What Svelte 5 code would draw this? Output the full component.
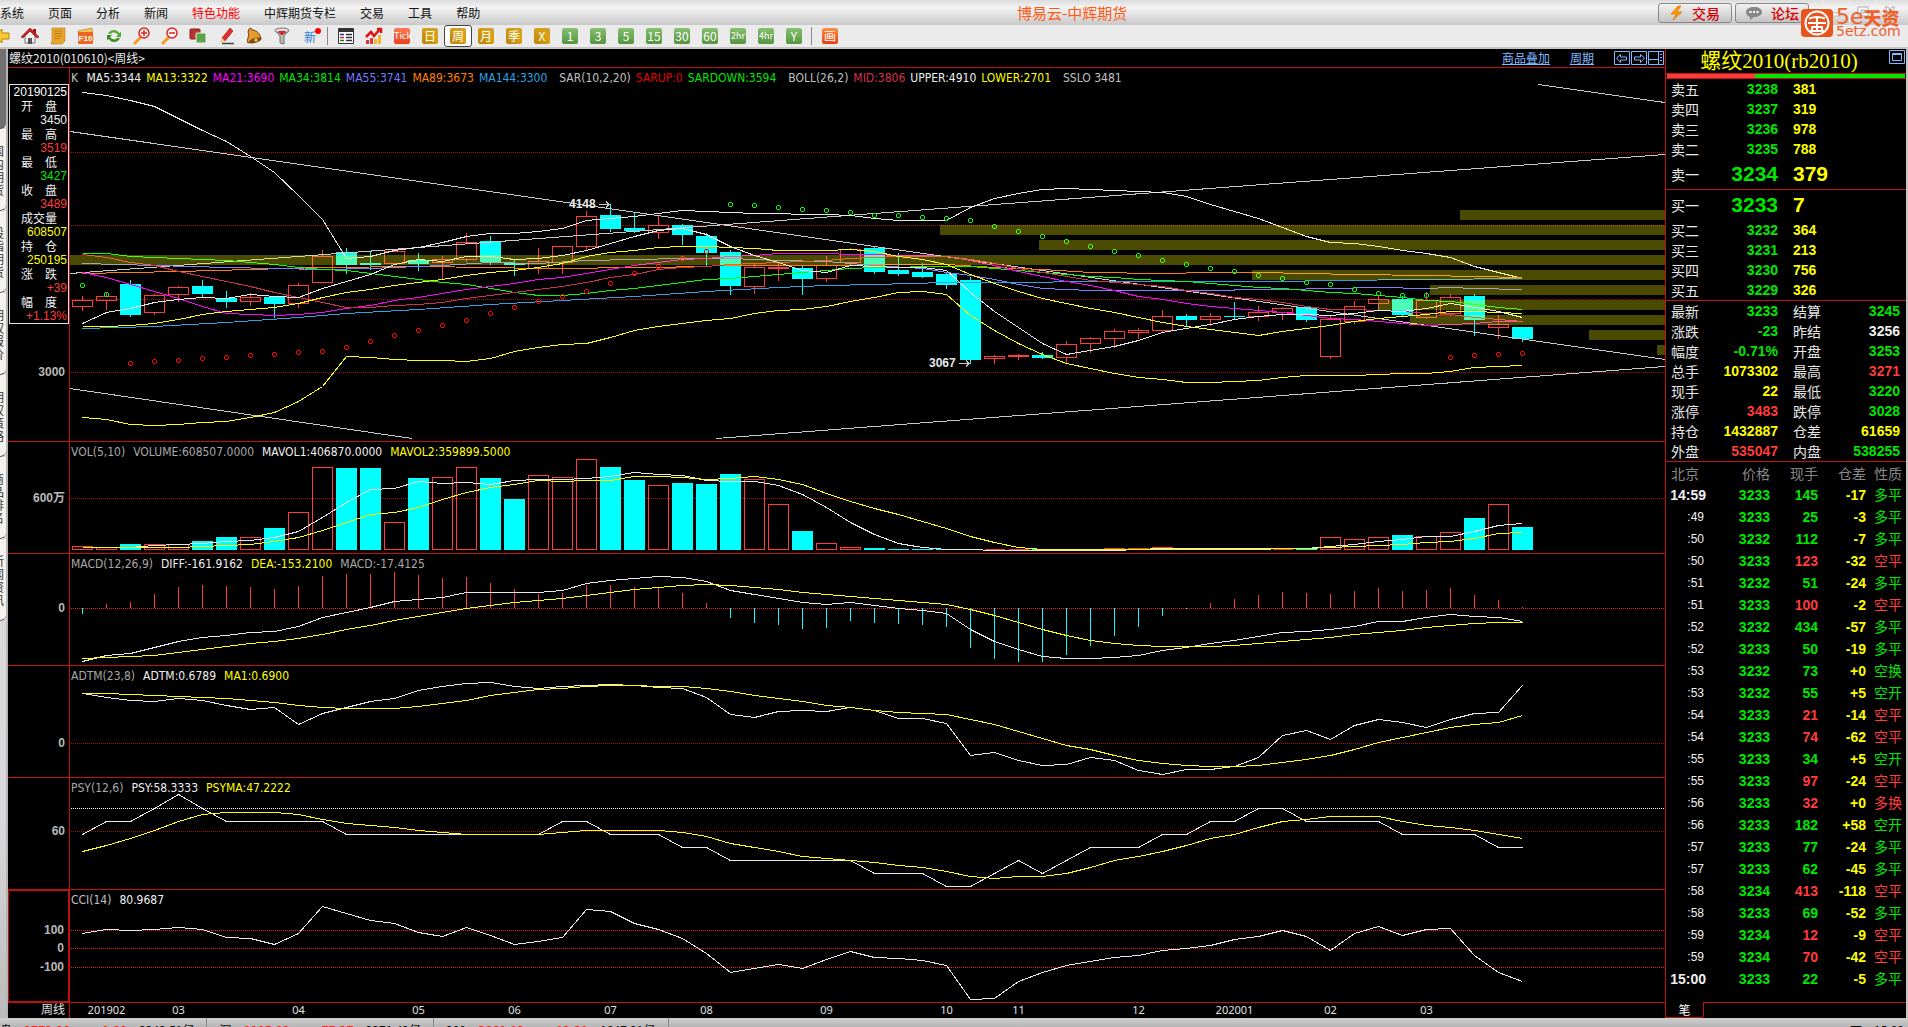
<script>
  let period = $state('周');

  const menus = ['系统', '页面', '分析', '新闻', '特色功能', '中辉期货专栏', '交易', '工具', '帮助'];
  const sideTabs = ['国内期货', '股指期货', '期权报价', '期权策略', '商品排名', '新闻资讯'];

  const periods = [
    { label: 'Tick', tone: 'red' },
    { label: '日', tone: 'gold' },
    { label: '周', tone: 'gold' },
    { label: '月', tone: 'gold' },
    { label: '季', tone: 'gold' },
    { label: 'X', tone: 'gold' },
    { label: '1', tone: 'green' },
    { label: '3', tone: 'green' },
    { label: '5', tone: 'green' },
    { label: '15', tone: 'green' },
    { label: '30', tone: 'green' },
    { label: '60', tone: 'green' },
    { label: '2hr', tone: 'green' },
    { label: '4hr', tone: 'green' },
    { label: 'Y', tone: 'green' }
  ];

  const info = [
    ['开　盘', '3450', 'white'],
    ['最　高', '3519', 'red'],
    ['最　低', '3427', 'green'],
    ['收　盘', '3489', 'red'],
    ['成交量', '608507', 'yellow'],
    ['持　仓', '250195', 'yellow'],
    ['涨　跌', '+39', 'red'],
    ['幅　度', '+1.13%', 'red']
  ];

  // All series share one drawing space: x runs from LEFT, one bar every STEP
  const LEFT = 70;
  const WIDTH = 1595;
  const STEP = 24;
  const cx = (i) => 82.5 + i * STEP;
  const pct = (x) => ((x - LEFT) / WIDTH) * 100;

  // a series is a list of y values, or of [bar, y] pairs where it is sparse
  const points = (ys) =>
    ys.map((v, i) => (Array.isArray(v) ? `${cx(v[0])},${v[1] + 0.5}` : `${cx(i)},${v + 0.5}`)).join(' ');

  // up (1) or down (0), high, body top, body bottom, low
  const candles = [
    [1, 296, 300, 306, 310], [1, 293, 296, 300, 309], [0, 280, 284, 315, 316], [1, 294, 295, 312, 314],
    [1, 286, 287, 294, 301], [0, 280, 286, 294, 296], [0, 291, 298, 302, 307], [1, 293, 297, 301, 305],
    [0, 296, 297, 304, 317], [1, 283, 285, 303, 307], [1, 250, 256, 282, 282], [0, 248, 252, 265, 273],
    [0, 251, 263, 265, 269], [1, 251, 251, 263, 264], [0, 253, 260, 264, 270], [1, 256, 259, 262, 278],
    [1, 233, 242, 259, 261], [0, 236, 241, 262, 264], [0, 260, 263, 265, 275], [1, 248, 261, 268, 273],
    [1, 246, 246, 262, 273], [1, 211, 216, 246, 250], [0, 204, 215, 229, 231], [0, 213, 228, 231, 232],
    [1, 215, 225, 232, 238], [0, 224, 225, 235, 244], [0, 233, 236, 253, 265], [0, 250, 252, 286, 294],
    [1, 263, 267, 286, 293], [1, 262, 267, 268, 280], [0, 265, 268, 279, 294], [1, 256, 265, 278, 281],
    [1, 248, 249, 262, 264], [0, 247, 248, 272, 273], [0, 253, 270, 274, 275], [0, 263, 272, 277, 277],
    [0, 273, 274, 285, 288], [0, 277, 280, 360, 363], [1, 355, 356, 358, 363], [1, 354, 355, 356, 359],
    [0, 352, 355, 358, 358], [1, 341, 344, 357, 362], [1, 337, 338, 343, 352], [1, 329, 331, 338, 347],
    [1, 328, 330, 332, 338], [1, 310, 316, 330, 332], [0, 314, 316, 320, 325], [1, 313, 316, 319, 325],
    [0, 302, 316, 317, 318], [1, 306, 312, 316, 320], [1, 307, 308, 312, 319], [0, 306, 307, 320, 321],
    [1, 316, 319, 356, 358], [1, 301, 306, 321, 323], [1, 295, 299, 303, 309], [0, 296, 299, 315, 316],
    [1, 292, 300, 317, 318], [1, 294, 297, 313, 315], [0, 294, 296, 320, 335], [1, 315, 324, 327, 338],
    [0, 327, 327, 339, 341]
  ];

  // volume-at-price bands: top, left edge
  const bands = [
    [210, 1460], [225, 940], [240, 1039], [255, 70], [270, 1252],
    [285, 1430], [300, 1378], [315, 1410], [330, 1589], [345, 1657]
  ];

  const trends = [
    [70, 131, 1665, 359], [70, 273, 1665, 154], [1538, 84, 1665, 102], [70, 388, 412, 438], [716, 438, 1665, 366]
  ];

  const priceLines = [
    { tone: 's-white', ys: [92, 95, 100, 106, 118, 130, 141, 156, 172, 195, 219, 258, 256, 250, 247, 242, 236, 233, 233, 231, 228, 220, 218, 216, 213, 210, 211, 212, 213, 213, 214, 214, 215, 218, 220, 220, 220, 207, 198, 193, 189, 188, 189, 190, 191, 192, 196, 204, 211, 218, 227, 236, 242, 243, 246, 250, 253, 257, 266, 272, 278] },
    { tone: 's-orange', ys: [[0, 273], [2, 272], [4, 271], [7, 269], [10, 267], [14, 266], [17, 267], [19, 268], [24, 267], [27, 265], [31, 265], [34, 264], [36, 264], [38, 267], [40, 269], [42, 272], [45, 273], [47, 272], [49, 272], [51, 273], [53, 274], [56, 275], [60, 277]] },
    { tone: 's-violet', ys: [[0, 263], [3, 265], [6, 267], [8, 268], [10, 269], [12, 268], [14, 266], [15, 265], [17, 262], [19, 263], [21, 260], [23, 259], [25, 258], [27, 258], [29, 260], [31, 261], [33, 265], [35, 268], [36, 272], [37, 275], [38, 279], [39, 284], [40, 288], [42, 290], [46, 290], [50, 289], [54, 287], [56, 288], [57, 287], [58, 288], [60, 289]] },
    { tone: 's-blue', ys: [[0, 328], [3, 326], [6, 322], [9, 317], [11, 313], [14, 309], [17, 304], [20, 300], [23, 296], [26, 291], [29, 287], [31, 285], [33, 284], [36, 282], [45, 281], [50, 281], [52, 280], [56, 279], [60, 278]] },
    { tone: 's-lime', ys: [253, 253, 256, 257, 258, 259, 260, 262, 264, 267, 269, 270, 273, 276, 279, 282, 284, 288, 292, 295, 295, 293, 290, 288, 285, 282, 279, 278, 276, 274, 272, 270, 268, 267, 267, 266, 266, 266, 268, 270, 272, 274, 276, 277, 279, 280, 281, 283, 285, 287, 288, 290, 292, 293, 295, 297, 300, 301, 304, 307, 309] },
    { tone: 's-magenta', ys: [272, 277, 284, 291, 298, 306, 313, 314, 315, 314, 312, 308, 305, 300, 297, 293, 289, 286, 283, 279, 277, 273, 269, 265, 262, 259, 258, 256, 255, 253, 253, 253, 254, 254, 255, 255, 256, 260, 265, 271, 276, 281, 285, 290, 296, 299, 303, 306, 308, 310, 312, 315, 318, 319, 321, 323, 325, 324, 323, 321, 321] },
    { tone: 's-crimson', ys: [254, 257, 262, 265, 271, 276, 281, 286, 292, 297, 302, 307, 307, 305, 304, 302, 298, 295, 292, 289, 286, 282, 277, 274, 269, 267, 266, 264, 263, 262, 261, 260, 258, 257, 256, 256, 256, 259, 263, 268, 272, 276, 280, 282, 284, 286, 290, 293, 297, 299, 302, 306, 309, 309, 310, 311, 313, 314, 317, 319, 321] },
    { tone: 's-yellow', ys: [417, 419, 424, 425, 424, 422, 421, 417, 412, 401, 386, 356, 357, 359, 360, 360, 361, 358, 351, 347, 344, 343, 337, 330, 326, 323, 320, 318, 313, 310, 309, 306, 301, 297, 292, 291, 294, 315, 330, 343, 354, 363, 368, 373, 377, 379, 382, 382, 381, 380, 377, 375, 375, 375, 374, 373, 373, 371, 367, 366, 365] },
    { tone: 's-yellow', ys: [326, 326, 325, 323, 319, 314, 311, 309, 307, 303, 297, 292, 289, 285, 282, 279, 275, 272, 270, 267, 263, 256, 252, 250, 247, 246, 246, 247, 248, 250, 250, 250, 249, 251, 256, 259, 264, 274, 283, 291, 298, 303, 308, 312, 317, 322, 326, 329, 332, 335, 331, 328, 325, 321, 318, 316, 314, 311, 311, 312, 313] },
    { tone: 's-white', ys: [323, 312, 308, 302, 299, 297, 298, 294, 296, 297, 288, 281, 274, 264, 259, 261, 256, 256, 259, 258, 255, 250, 243, 236, 230, 228, 234, 246, 255, 262, 270, 272, 265, 266, 267, 267, 270, 292, 311, 327, 343, 354, 350, 346, 340, 332, 328, 324, 319, 316, 314, 314, 315, 313, 310, 311, 308, 303, 307, 311, 317] }
  ];

  const from = (start, ys) => ys.map((y, i) => [start + i, y]);
  const sarDown = [
    [0, 285],
    [1, 294],
    ...from(27, [204, 205, 207, 209, 210, 212, 215, 215, 217, 218, 220, 226, 231, 236, 241, 246, 251, 255, 260, 264, 268, 271, 275, 278, 282, 284, 289, 293, 295, 295])
  ];
  const sarUp = [
    ...from(2, [363, 361, 360, 358, 357, 355, 354, 352, 351, 347, 341, 335, 330, 325, 320, 313, 307, 301, 296, 291, 283, 273, 266, 258, 251]),
    ...from(57, [357, 355, 354, 353])
  ];

  const VOL_BASE = 549;
  const volumes = [546, 547, 544, 544, 544, 541, 537, 537, 528, 512, 467, 468, 468, 522, 478, 477, 467, 478, 499, 475, 477, 459, 467, 480, 485, 483, 484, 474, 479, 504, 531, 543, 547, 548, 549, 549, 549, 549, 549, 549, 549, 549, 549, 548, 548, 547, 549, 549, 549, 549, 549, 548, 537, 539, 537, 535, 536, 532, 518, 504, 527];

  const MACD_ZERO = 608;
  const macd = [614, 604, 602, 594, 587, 585, 586, 587, 589, 586, 576, 574, 574, 572, 575, 578, 577, 583, 589, 594, 593, 585, 585, 587, 588, 593, 603, 618, 623, 625, 629, 628, 621, 623, 624, 625, 627, 648, 659, 662, 662, 655, 646, 636, 627, 616, 609, 603, 599, 595, 592, 593, 594, 591, 588, 591, 590, 588, 595, 600, 607];

  const panes = [
    {
      id: 'price', top: 68, height: 373,
      legend: [
        ['K ', 'silver'], ['MA5:3344', 'white'], ['MA13:3322', 'yellow'], ['MA21:3690', 'magenta'], ['MA34:3814', 'green'],
        ['MA55:3741', 'violet'], ['MA89:3673', 'orange'], ['MA144:3300', 'blue'], ['  SAR(10,2,20)', 'silver'],
        ['SARUP:0', 'deepred'], ['SARDOWN:3594', 'green'], ['  BOLL(26,2)', 'silver'], ['MID:3806', 'crimson'],
        ['UPPER:4910', 'white'], ['LOWER:2701', 'yellow'], ['  SSLO 3481', 'silver']
      ],
      grid: [[152], [225], [299], [372, '3000']],
      lines: priceLines
    },
    {
      id: 'vol', top: 442, height: 111,
      legend: [['VOL(5,10)', 'gray'], ['VOLUME:608507.0000', 'gray'], ['MAVOL1:406870.0000', 'white'], ['MAVOL2:359899.5000', 'yellow']],
      grid: [[498, '600万']],
      lines: [
        { tone: 's-white', ys: [547, 547, 547, 545, 544, 543, 541, 540, 537, 531, 517, 502, 489, 488, 481, 483, 482, 484, 480, 479, 479, 478, 476, 472, 474, 475, 480, 481, 481, 485, 494, 507, 522, 534, 543, 547, 549, 549, 550, 550, 550, 550, 550, 550, 549, 548, 548, 548, 548, 548, 548, 548, 546, 544, 541, 539, 536, 536, 531, 525, 523] },
        { tone: 's-yellow', ys: [547, 547, 547, 547, 547, 546, 545, 544, 541, 537, 530, 522, 514, 512, 507, 499, 492, 487, 484, 480, 481, 480, 480, 476, 476, 477, 479, 478, 476, 479, 484, 493, 501, 508, 514, 521, 528, 536, 542, 547, 549, 549, 549, 549, 549, 549, 549, 549, 549, 549, 548, 548, 547, 546, 545, 544, 542, 541, 538, 533, 532] }
      ]
    },
    {
      id: 'macd', top: 554, height: 111,
      legend: [['MACD(12,26,9)', 'gray'], ['DIFF:-161.9162', 'white'], ['DEA:-153.2100', 'yellow'], ['MACD:-17.4125', 'gray']],
      grid: [[608, '0', 'bright']],
      lines: [
        { tone: 's-white', ys: [661, 655, 653, 647, 641, 637, 635, 632, 631, 626, 617, 612, 607, 601, 599, 597, 592, 592, 592, 592, 590, 583, 580, 578, 576, 577, 581, 590, 594, 598, 602, 604, 602, 605, 608, 610, 613, 629, 641, 649, 656, 658, 658, 657, 655, 650, 647, 643, 640, 636, 632, 631, 629, 626, 621, 621, 617, 614, 616, 617, 621] },
        { tone: 's-yellow', ys: [658, 657, 656, 655, 652, 649, 646, 643, 641, 638, 634, 629, 625, 620, 616, 612, 608, 605, 602, 600, 598, 595, 592, 589, 587, 585, 584, 585, 587, 589, 592, 594, 596, 598, 600, 602, 604, 609, 615, 622, 629, 635, 640, 643, 645, 646, 646, 646, 645, 643, 641, 639, 637, 634, 632, 630, 627, 625, 623, 622, 622] }
      ]
    },
    {
      id: 'adtm', top: 666, height: 111,
      legend: [['ADTM(23,8)', 'gray'], ['ADTM:0.6789', 'white'], ['MA1:0.6900', 'yellow']],
      grid: [[743, '0']],
      lines: [
        { tone: 's-white', ys: [693, 697, 700, 701, 698, 700, 705, 709, 707, 724, 713, 707, 701, 698, 690, 686, 683, 682, 686, 688, 686, 685, 684, 685, 687, 688, 697, 714, 717, 711, 710, 711, 707, 710, 718, 718, 723, 755, 752, 760, 765, 764, 757, 760, 770, 774, 769, 769, 766, 757, 735, 730, 739, 725, 719, 722, 727, 719, 713, 712, 685] },
        { tone: 's-yellow', ys: [693, 693, 694, 695, 696, 697, 698, 700, 702, 705, 707, 708, 708, 708, 706, 703, 700, 695, 692, 689, 688, 686, 685, 685, 686, 686, 688, 691, 695, 698, 701, 705, 707, 710, 712, 713, 714, 719, 724, 731, 738, 745, 749, 755, 760, 763, 765, 766, 766, 765, 762, 759, 755, 749, 742, 737, 732, 727, 724, 722, 715] }
      ]
    },
    {
      id: 'psy', top: 778, height: 111,
      legend: [['PSY(12,6)', 'gray'], ['PSY:58.3333', 'white'], ['PSYMA:47.2222', 'yellow']],
      grid: [[808, '', 'light'], [831, '60']],
      lines: [
        { tone: 's-white', ys: [834, 821, 821, 808, 794, 808, 821, 821, 821, 821, 821, 834, 834, 834, 834, 834, 834, 834, 834, 834, 821, 821, 834, 834, 834, 847, 847, 860, 860, 860, 860, 860, 860, 873, 873, 873, 886, 886, 873, 860, 873, 860, 847, 847, 847, 834, 834, 821, 821, 808, 808, 821, 821, 821, 821, 834, 834, 834, 834, 847, 847] },
        { tone: 's-yellow', ys: [851, 845, 838, 830, 821, 814, 812, 812, 812, 814, 819, 823, 825, 827, 830, 832, 834, 834, 834, 834, 832, 830, 830, 830, 830, 832, 836, 843, 847, 851, 856, 858, 860, 862, 865, 867, 871, 876, 878, 876, 876, 873, 867, 860, 856, 851, 845, 838, 834, 827, 821, 819, 816, 816, 816, 821, 825, 827, 830, 834, 838] }
      ]
    },
    {
      id: 'cci', top: 890, height: 112,
      legend: [['CCI(14)', 'silver'], ['80.9687', 'white']],
      grid: [[930, '100', 'bright'], [948, '0', 'bright'], [967, '-100', 'bright']],
      lines: [
        { tone: 's-white', ys: [933, 929, 930, 929, 927, 929, 937, 938, 944, 933, 906, 913, 920, 923, 932, 936, 927, 935, 944, 941, 937, 909, 911, 923, 929, 938, 953, 972, 968, 964, 968, 959, 951, 957, 958, 960, 965, 999, 998, 981, 972, 965, 961, 957, 955, 950, 948, 945, 939, 936, 930, 936, 950, 933, 926, 935, 929, 928, 955, 972, 981] }
      ]
    }
  ];

  const marks = [
    { text: '4148', x: 569, y: 204, to: 609 },
    { text: '3067', x: 929, y: 363, to: 969 }
  ];

  const months = [[1, '201902'], [4, '03'], [9, '04'], [14, '05'], [18, '06'], [22, '07'], [26, '08'], [31, '09'], [36, '10'], [39, '11'], [44, '12'], [48, '202001'], [52, '02'], [56, '03']];

  const asks = [['卖五', 3238, 381], ['卖四', 3237, 319], ['卖三', 3236, 978], ['卖二', 3235, 788], ['卖一', 3234, 379]];
  const bids = [['买一', 3233, 7], ['买二', 3232, 364], ['买三', 3231, 213], ['买四', 3230, 756], ['买五', 3229, 326]];

  const stats = [
    ['最新', '3233', 'green', '结算', '3245', 'green'],
    ['涨跌', '-23', 'green', '昨结', '3256', 'white'],
    ['幅度', '-0.71%', 'green', '开盘', '3253', 'green'],
    ['总手', '1073302', 'yellow', '最高', '3271', 'red'],
    ['现手', '22', 'yellow', '最低', '3220', 'green'],
    ['涨停', '3483', 'red', '跌停', '3028', 'green'],
    ['持仓', '1432887', 'yellow', '仓差', '61659', 'yellow'],
    ['外盘', '535047', 'red', '内盘', '538255', 'green']
  ];

  const ticks = [
    ['14:59', 3233, 145, '-17', '多平'], [':49', 3233, 25, '-3', '多平'], [':50', 3232, 112, '-7', '多平'],
    [':50', 3233, 123, '-32', '空平'], [':51', 3232, 51, '-24', '多平'], [':51', 3233, 100, '-2', '空平'],
    [':52', 3232, 434, '-57', '多平'], [':52', 3233, 50, '-19', '多平'], [':53', 3232, 73, '+0', '空换'],
    [':53', 3232, 55, '+5', '空开'], [':54', 3233, 21, '-14', '空平'], [':54', 3233, 74, '-62', '空平'],
    [':55', 3233, 34, '+5', '空开'], [':55', 3233, 97, '-24', '空平'], [':56', 3233, 32, '+0', '多换'],
    [':56', 3233, 182, '+58', '空开'], [':57', 3233, 77, '-24', '多平'], [':57', 3233, 62, '-45', '多平'],
    [':58', 3234, 413, '-118', '空平'], [':58', 3233, 69, '-52', '多平'], [':59', 3234, 12, '-9', '空平'],
    [':59', 3234, 70, '-42', '空平'], ['15:00', 3233, 22, '-5', '多平']
  ];
  const tickTone = (kind) => (kind === '空平' || kind === '多换' ? 'red' : 'green');
</script>

{#snippet quoteRow([label, price, size], big)}
  <tr class:big>
    <th scope="row">{label}</th>
    <td class="price green">{price}</td>
    <td class="size yellow">{size}</td>
  </tr>
{/snippet}

<div class="app">
  <header class="titlebar">
    <nav>
      {#each menus as item}
        <a href="#menu" class:hot={item === '特色功能'}>{item}</a>
      {/each}
    </nav>
    <div class="caption">博易云-中辉期货</div>
    <div class="actions">
      <button class="pill">
        <svg width="14" height="16" viewBox="0 0 14 16"><path d="M8 1 1 9h5l-3 6 9-8H7l4-6z" fill="#f90" stroke="#c96a00" stroke-width=".6" /></svg>
        交易
      </button>
      <button class="pill">
        <svg width="18" height="16" viewBox="0 0 18 16">
          <path d="M9 2c4.500 0 8 2 8 5s-3.500 5-8 5l-4 3v-3C2.500 11.500 1 9.500 1 7c0-3 3.500-5 8-5z" fill="#888" />
          <path d="M4.500 7h2M8 7h2M11.500 7h2" stroke="#fff" stroke-width="2" />
        </svg>
        论坛
      </button>
    </div>
    <div class="controls">
      <button aria-label="最小化"><svg width="14" height="14" viewBox="0 0 14 14"><path d="M3 8h8v3H3z" fill="#fff" stroke="#bbb" /></svg></button>
      <button aria-label="还原"><svg width="14" height="14" viewBox="0 0 14 14"><path d="M2 2h10v9H2zM5 5h4v3H5z" fill="#fff" fill-rule="evenodd" stroke="#aaa" /></svg></button>
      <button aria-label="关闭"><svg width="14" height="14" viewBox="0 0 14 14"><path d="M2 2h3l2 3 2-3h3L9 7l3 5H9L7 9l-2 3H2l3-5z" fill="#fff" stroke="#aaa" /></svg></button>
    </div>
    <div class="brand">
      <svg width="32" height="28" viewBox="0 0 32 28">
        <rect width="32" height="28" rx="4" fill="#e8541c" />
        <circle cx="16" cy="14" r="11.500" fill="none" stroke="#fff" stroke-width="2" />
        <path d="M8 9.500Q12 8 16 8t8 1.500M7 14h18M16 8.500v14M11 17.500v4M11 18h10v4M9 22h14" fill="none" stroke="#fff" stroke-width="2" />
      </svg>
      <div class="brand-text"><strong><span>5e</span>天资</strong><small>5etz.com</small></div>
    </div>
  </header>

  <div class="toolbar">
    <button aria-label="后退"><svg width="18" height="18" viewBox="0 0 18 18"><path d="M2 9l7-7v4h7v6H9v4z" fill="#ffc933" stroke="#b98200" /></svg></button>
    <button aria-label="首页">
      <svg width="18" height="18" viewBox="0 0 18 18">
        <path d="M4 9v7h10V9L9 4z" fill="#eee" stroke="#777" />
        <path d="M12 2h3v5h-3z" fill="#a11" /><path d="M0 10 9 1l9 9-2 1-7-7-7 7z" fill="#d42020" stroke="#811" stroke-width=".6" />
        <path d="M7 11h4v6H7z" fill="#555" />
      </svg>
    </button>
    <button aria-label="公告">
      <svg width="18" height="18" viewBox="0 0 18 18">
        <path d="M3 1h13v13l-3 3H2l1-3z" fill="#e8a62c" stroke="#c08820" stroke-width=".7" />
        <path d="M5 4h8M5 6.500h8M5 9h8M5 11.500h6" stroke="#b97b1b" />
      </svg>
    </button>
    <button aria-label="F10">
      <svg width="18" height="18" viewBox="0 0 18 18">
        <path d="M1 4l14-3 1 12-13 3z" fill="#f4c45a" stroke="#a8751c" stroke-width=".6" />
        <rect x="1" y="5" width="15" height="12" rx="1" fill="#ee6520" /><text x="8.500" y="14" font-size="8" font-weight="700" text-anchor="middle" fill="#fff">F10</text>
      </svg>
    </button>
    <button aria-label="刷新">
      <svg width="18" height="18" viewBox="0 0 18 18">
        <path d="M3 7c2-5 9-5 11-1l2-1v5h-5l2-2C11 5 7 5 6 7z" fill="#55ab31" /><path d="M15 11c-2 5-9 5-11 1l-2 1V8h5l-2 2c2 3 6 3 7 1z" fill="#3c8c24" />
      </svg>
    </button>
    <button aria-label="放大">
      <svg width="18" height="18" viewBox="0 0 18 18">
        <path d="M7 11l-5 5" stroke="#f39a20" stroke-width="3" stroke-linecap="round" />
        <circle cx="11" cy="6" r="5" fill="#fff5f3" stroke="#d22" stroke-width="1.500" /><path d="M8 6h6M11 3v6" stroke="#d22" stroke-width="1.500" />
      </svg>
    </button>
    <button aria-label="缩小">
      <svg width="18" height="18" viewBox="0 0 18 18">
        <path d="M7 11l-5 5" stroke="#f39a20" stroke-width="3" stroke-linecap="round" />
        <circle cx="11" cy="6" r="5" fill="#fff5f3" stroke="#d22" stroke-width="1.500" /><path d="M8 6h6" stroke="#d22" stroke-width="1.500" />
      </svg>
    </button>
    <button aria-label="叠加">
      <svg width="18" height="18" viewBox="0 0 18 18">
        <rect x="1" y="2" width="10" height="10" rx="1" fill="#b83430" stroke="#802020" /><rect x="7" y="6" width="10" height="10" rx="1" fill="#5da24b" stroke="#e8f2e4" />
      </svg>
    </button>
    <button aria-label="画线">
      <svg width="18" height="18" viewBox="0 0 18 18">
        <path d="M5 11 13 1l3 3-8 10z" fill="#e22c2c" stroke="#961212" stroke-width=".6" /><path d="M5 11l3 3-5 2z" fill="#f4c489" /><path d="M5 16.500h12" stroke="#444" stroke-width="1.500" />
      </svg>
    </button>
    <button aria-label="预警">
      <svg width="18" height="18" viewBox="0 0 18 18">
        <path d="M4 2c2-2 3 0 3 1 5 0 8 4 9 9L3 16C1 13 5 9 3 5z" fill="#e39a30" stroke="#6b3a08" /><ellipse cx="10" cy="13.500" rx="6.500" ry="2.500" transform="rotate(-17 10 13)" fill="#7d4a10" /><circle cx="11" cy="13" r="1.800" fill="#f3c34c" />
      </svg>
    </button>
    <button aria-label="筛选">
      <svg width="18" height="18" viewBox="0 0 18 18">
        <path d="M2 3l5 6v7l4 1V9l5-6z" fill="#bbb" stroke="#555" stroke-width=".8" /><ellipse cx="9" cy="3.500" rx="7" ry="2.500" fill="#ddd" stroke="#777" /><path d="M5 4h8l-3 4H8z" fill="#d22" />
      </svg>
    </button>
    <button class="fresh">新<i></i></button>
    <span class="sep"></span>
    <button aria-label="报价表">
      <svg width="18" height="18" viewBox="0 0 18 18">
        <path d="M1.500 1.500h15v15h-15z" fill="#fff" stroke="#333" /><path d="M2 3.500h14" stroke="#333" stroke-width="3" /><path d="M3 7.500h4" stroke="#22c" stroke-width="1.500" /><path d="M3 10.500h4" stroke="#c22" stroke-width="1.500" /><path d="M3 13.500h4" stroke="#272" stroke-width="1.500" /><path d="M9 7.500h6M9 10.500h6M9 13.500h6" stroke="#333" stroke-width="1.500" />
      </svg>
    </button>
    <button aria-label="分时图">
      <svg width="18" height="18" viewBox="0 0 18 18">
        <path d="M1 13h3v4H1zM5 11h3v6H5z" fill="#d33" /><path d="M9 12h3v5H9zM13 8h3v9h-3z" fill="#efb429" /><path d="M1 10l5-5 3 4 6-7M12 2h4v4" fill="none" stroke="#d11" stroke-width="2.500" />
      </svg>
    </button>
    {#each periods as p}
      <button class="period" class:active={period === p.label} onclick={() => (period = p.label)}>
        <span class="chip {p.tone}-chip" class:tiny={p.label.length > 2}>{p.label}</span>
      </button>
    {/each}
    <span class="sep"></span>
    <button class="period"><span class="chip paint-chip">画</span></button>
  </div>

  <div class="workspace">
    <div class="side">
      <div class="side-tab current"></div>
      {#each sideTabs as tab}
        <div class="side-tab"><span>{tab}</span></div>
      {/each}
    </div>

    <main class="chart">
      <div class="chart-head">
        <span class="contract">螺纹2010(010610)&lt;周线&gt;</span>
        <a href="#overlay">商品叠加</a>
        <a href="#period">周期</a>
        <div class="head-icons">
          <button aria-label="左移"><svg width="16" height="14" viewBox="0 0 16 14"><path d="M.5.5h15v13H.5zM2.500 7l4-3.500V6h6v3h-6v2.500z" /></svg></button>
          <button aria-label="右移"><svg width="16" height="14" viewBox="0 0 16 14"><path d="M.5.5h15v13H.5zM13.500 7l-4-3.500V6h-6v3h6v2.500z" /></svg></button>
          <button aria-label="布局"><svg width="16" height="14" viewBox="0 0 16 14"><path d="M.5.5h15v13H.5zM.5 8.500h10M10.500.5v13M12 3.500h2M12 6.500h2M12 9.500h2" /></svg></button>
        </div>
      </div>

      <div class="panes">
        {#each panes as pane (pane.id)}
          <div class="axis" class:focused={pane.id === 'cci'}>
            {#each pane.grid as [y, label]}
              {#if label}
                <span class="scale" style="top: {((y - pane.top) / pane.height) * 100}%">{label}</span>
              {/if}
            {/each}
            {#if pane.id === 'price'}
              <dl class="info">
                <dd class="date">20190125</dd>
                {#each info as [label, value, tone]}
                  <dt>{label}</dt>
                  <dd class={tone}>{value}</dd>
                {/each}
              </dl>
            {/if}
          </div>
          <section class="plot">
            <svg viewBox="{LEFT} {pane.top} {WIDTH} {pane.height}" preserveAspectRatio="none">
              {#each pane.grid as [y, , tone]}
                <line class="grid {tone ?? ''}" x1={LEFT + 1} x2={LEFT + WIDTH} y1={y + 0.5} y2={y + 0.5} />
              {/each}

              {#if pane.id === 'price'}
                {#each candles as [up, high, top, bottom, low], i}
                  {#if up}
                    <path class="up" d="M{cx(i)} {high}V{top}M{cx(i)} {bottom}V{low + 1}M{cx(i) - 10} {top + 0.5}h20V{bottom + 0.5}h-20z" />
                  {:else}
                    <path class="down" d="M{cx(i) - 0.5} {high}h1V{low + 1}h-1zM{cx(i) - 10.5} {top}h21V{bottom}h-21z" />
                  {/if}
                {/each}
                {#each trends as [x1, y1, x2, y2]}
                  <line class="trend" {x1} y1={y1 + 0.5} {x2} y2={y2 + 0.5} />
                {/each}
              {:else if pane.id === 'vol'}
                {#each volumes as top, i}
                  {#if candles[i][0]}
                    <path class="up" d="M{cx(i) - 10} {top + 0.5}h20V{VOL_BASE + 0.5}h-20z" />
                  {:else}
                    <path class="down" d="M{cx(i) - 10.5} {top}h21V{VOL_BASE + 1}h-21z" />
                  {/if}
                {/each}
              {:else if pane.id === 'macd'}
                {#each macd as y, i}
                  <line class={y > MACD_ZERO ? 'bar-down' : 'bar-up'} x1={cx(i)} x2={cx(i)} y1={MACD_ZERO} y2={y} />
                {/each}
              {/if}

              {#each pane.lines as { tone, ys }}
                <polyline class="series {tone}" points={points(ys)} />
              {/each}

              {#if pane.id === 'price'}
                {#each sarDown as [i, y]}
                  <ellipse class="sar s-lime" cx={cx(i)} cy={y + 0.5} rx="2" ry="2" />
                {/each}
                {#each sarUp as [i, y]}
                  <ellipse class="sar s-red" cx={cx(i)} cy={y + 0.5} rx="2" ry="2" />
                {/each}
                {#each bands as [y, x]}
                  <rect class="band" {x} {y} width={LEFT + WIDTH - x} height="10" />
                {/each}
                {#each marks as m}
                  <path class="trend" d="M{m.to - 10} {m.y + 0.5}h10m-3 -3l3 3l-3 3" />
                {/each}
              {/if}
            </svg>
            <div class="legend" class:wide={pane.id !== 'price'}>
              {#each pane.legend as [text, tone]}
                <span class={tone}>{text}</span>
              {/each}
            </div>
            {#if pane.id === 'price'}
              {#each marks as m}
                <span class="mark" style="left: {pct(m.x)}%; top: {((m.y - pane.top) / pane.height) * 100}%">{m.text}</span>
              {/each}
            {/if}
          </section>
        {/each}

        <div class="axis foot">周线</div>
        <div class="plot foot">
          {#each months as [i, label]}
            <span class="month" style="left: {pct(cx(i))}%">{label}</span>
          {/each}
        </div>
      </div>
    </main>

    <aside class="quote">
      <div class="quote-head">
        <h1>螺纹2010(rb2010)</h1>
        <button aria-label="最大化"><svg width="16" height="14" viewBox="0 0 16 14"><path d="M.5.5h15v13H.5zM3.500 3.500h9v7h-9zM3.500 4.500h9" /></svg></button>
      </div>
      <div class="ratio"><i></i></div>
      <table class="book">
        <tbody>
          {#each asks as row, i}
            {@render quoteRow(row, i === 4)}
          {/each}
        </tbody>
      </table>
      <table class="book">
        <tbody>
          {#each bids as row, i}
            {@render quoteRow(row, i === 0)}
          {/each}
        </tbody>
      </table>
      <table class="stats">
        <tbody>
          {#each stats as [l1, v1, t1, l2, v2, t2]}
            <tr>
              <th scope="row">{l1}</th>
              <td class={t1}>{v1}</td>
              <th scope="row">{l2}</th>
              <td class={t2}>{v2}</td>
            </tr>
          {/each}
        </tbody>
      </table>
      <table class="ticks">
        <thead>
          <tr><th>北京</th><th>价格</th><th>现手</th><th>仓差</th><th>性质</th></tr>
        </thead>
        <tbody>
          {#each ticks as [time, price, size, diff, kind]}
            <tr>
              <td class="white" class:second={time[0] === ':'}>{time}</td>
              <td class="green">{price}</td>
              <td class={tickTone(kind)}>{size}</td>
              <td class="yellow">{diff}</td>
              <td class="kind {tickTone(kind)}">{kind}</td>
            </tr>
          {/each}
        </tbody>
      </table>
      <div class="quote-foot"><button>笔</button></div>
    </aside>
  </div>

  <footer class="status">
    <span>盘</span><b class="index">2772.20</b><b>0.00</b><span>2242.51亿</span><i></i>
    <span>深</span><b class="index">9905.92</b><b>77.27</b><span>2371.42亿</span><i></i>
    <span>300</span><b class="index">3661.12</b><b>12.31</b><span>1047.21亿</span><i></i>
    <span class="clock">▼　15:00</span>
  </footer>
</div>

<style>
  :global(body) {
    margin: 0;
    background: #c8c4c4;
  }

  .app {
    display: flex;
    flex-direction: column;
    height: 100vh;
    overflow: hidden;
    font-family: 'Noto Sans CJK SC', sans-serif;
    font-size: 12px;
    color: #111;
  }

  button {
    padding: 0;
    border: 0;
    background: none;
    font-family: inherit;
    cursor: pointer;
  }

  .white { color: #f0f0f0; }
  .silver { color: #c0c0c0; }
  .gray { color: #a8a8a8; }
  .yellow { color: #ff0; }
  .green { color: #00e600; }
  .red { color: #ff3c3c; }
  .deepred { color: #e00000; }
  .magenta { color: #f0f; }
  .violet { color: #7878ff; }
  .orange { color: #ff8000; }
  .blue { color: #2fa0e0; }
  .crimson { color: #d8304c; }

  /* title bar */
  .titlebar {
    position: relative;
    flex: none;
    display: flex;
    height: 25px;
    line-height: 25px;
    background: linear-gradient(#dcdcdc, #f4f4f4 30%, #c8c8c8);
  }

  .titlebar nav {
    display: flex;
    gap: 24px;
  }

  .titlebar a {
    color: #111;
    text-decoration: none;
  }

  .titlebar a.hot {
    color: red;
  }

  .caption {
    flex: 1;
    padding-left: 6px;
    text-align: center;
    font-size: 15px;
    color: #ff5a14;
  }

  .actions {
    display: flex;
    align-items: center;
    gap: 3px;
  }

  .pill {
    display: flex;
    align-items: center;
    justify-content: center;
    gap: 8px;
    box-sizing: border-box;
    width: 74px;
    height: 20px;
    border: 1px solid #888;
    border-radius: 3px;
    background: linear-gradient(#f2f2f2, #c4c4c4);
    font-size: 14px;
    font-weight: 500;
    line-height: 18px;
    color: #d80000;
  }

  .controls {
    display: flex;
    gap: 1px;
    width: 99px;
    padding-left: 13px;
    box-sizing: border-box;
  }

  .controls button {
    width: 26px;
    border-left: 1px solid #eee;
    line-height: 12px;
  }

  .brand {
    position: absolute;
    top: 9px;
    right: 4px;
    z-index: 1;
    display: flex;
    gap: 3px;
    color: #f0602a;
  }

  .brand-text {
    width: 68px;
    line-height: 14px;
  }

  .brand-text strong {
    display: flex;
    align-items: center;
    height: 16px;
    font-size: 18px;
    font-weight: 900;
  }

  .brand-text strong span {
    font-family: 'DejaVu Sans', sans-serif;
    font-size: 22px;
    font-weight: 400;
  }

  .brand-text small {
    display: block;
    font-family: 'DejaVu Sans', sans-serif;
    font-size: 14px;
    line-height: 12px;
  }

  /* toolbar */
  .toolbar {
    flex: none;
    display: flex;
    align-items: center;
    height: 22px;
    margin-left: -12px;
    border-bottom: 2px solid #c8c4c4;
    background: #ebebeb;
  }

  .toolbar button {
    display: flex;
    flex: none;
    align-items: center;
    justify-content: center;
    box-sizing: border-box;
    width: 28px;
    height: 22px;
  }

  .toolbar text {
    font-family: 'Liberation Sans', sans-serif;
  }

  .sep {
    flex: none;
    width: 1px;
    height: 18px;
    margin: 0 4px 0 3px;
    background: #888;
  }

  .toolbar .fresh {
    position: relative;
    font-size: 12px;
    color: #2b7cd8;
  }

  .fresh i {
    position: absolute;
    top: 3px;
    right: 3px;
    width: 6px;
    height: 6px;
    border-radius: 50%;
    background: red;
  }

  .toolbar .active {
    border: 1px solid #444;
    border-radius: 3px;
    background: #fff;
  }

  .chip {
    display: block;
    width: 16px;
    height: 16px;
    border-radius: 2px;
    font-size: 12px;
    line-height: 16px;
    text-align: center;
    color: #fff;
  }

  .chip.tiny {
    font-size: 9px;
  }

  .gold-chip { background: linear-gradient(45deg, #b88208, #d8a010 60%, #d0a038); }
  .red-chip { background: linear-gradient(#ff7a58, #e8401c); }
  .green-chip { background: linear-gradient(#86c070, #569440); }
  .paint-chip { background: linear-gradient(#ff9040, #e83c14); }

  /* workspace */
  .workspace {
    flex: 1;
    display: flex;
    min-height: 0;
    padding-right: 2px;
    background: #c8c4c4;
  }

  .side {
    flex: none;
    box-sizing: border-box;
    width: 8px;
    border-right: 2px solid #b8b4b4;
    overflow: hidden;
    background: linear-gradient(#ddd, #d8d8dc 80%, #bbb);
  }

  .side-tab {
    display: flex;
    justify-content: flex-end;
    align-items: center;
    box-sizing: border-box;
    width: 6px;
    height: 82px;
    padding-right: 2px;
    border-bottom: 1px solid #555;
    border-bottom-right-radius: 6px 6px;
    background: #f4f2ec;
  }

  .side-tab.current {
    height: 80px;
    background: #707070;
  }

  .side-tab span {
    flex: none;
    width: 12px;
    line-height: 13px;
    word-break: break-all;
    color: #333;
  }

  .chart {
    flex: 1;
    display: flex;
    flex-direction: column;
    min-width: 0;
    background: #000;
  }

  .chart-head {
    flex: none;
    display: flex;
    align-items: center;
    height: 18px;
    padding: 0 1px;
    line-height: 18px;
    color: #e8e8e8;
  }

  .contract {
    flex: 1;
  }

  .chart-head a {
    margin-right: 20px;
    color: #7fb9ff;
  }

  .head-icons {
    display: flex;
    gap: 1px;
  }

  .head-icons button,
  .quote-head button {
    display: flex;
  }

  .head-icons path,
  .quote-head path {
    fill: none;
    stroke: #7fb9ff;
  }

  .panes {
    flex: 1;
    display: grid;
    grid-template-columns: 62px 1fr;
    grid-template-rows: 374fr repeat(4, 112fr) 113fr 16px;
    min-height: 0;
  }

  .axis,
  .plot {
    position: relative;
    min-width: 0;
    min-height: 0;
    border-top: 1px solid #c01010;
  }

  .axis {
    border-right: 1px solid #c01010;
  }

  .axis.focused {
    border: 2px solid #c01010;
    border-width: 2px 2px 1px 1px;
  }

  .plot svg {
    position: absolute;
    inset: 0;
    width: 100%;
    height: 100%;
    shape-rendering: crispEdges;
  }

  .scale {
    position: absolute;
    right: 4px;
    margin-top: -8px;
    font-family: 'Liberation Sans', 'Noto Sans CJK SC', sans-serif;
    font-weight: 700;
    line-height: 16px;
    color: #b8b8b8;
  }

  .info {
    position: absolute;
    top: 16px;
    left: 1px;
    right: 0;
    margin: 0;
    border: 1px solid #e0e0e0;
    background: #000;
    font-family: 'Liberation Sans', 'Noto Sans CJK SC', sans-serif;
    line-height: 14px;
  }

  .info dt {
    height: 14px;
    line-height: 16px;
    text-align: center;
    color: #f0f0f0;
  }

  .info dd {
    height: 14px;
    margin: 0 1px 0 0;
    text-align: right;
  }

  .info .date {
    color: #fff;
  }

  .legend {
    position: absolute;
    top: 1px;
    left: 1px;
    display: flex;
    gap: 5px;
    font-family: 'DejaVu Sans Condensed', 'Noto Sans', sans-serif;
    line-height: 18px;
    white-space: pre;
  }

  .legend.wide {
    gap: 8px;
  }

  .mark {
    position: absolute;
    margin-top: -8px;
    font-family: 'Liberation Sans', sans-serif;
    font-weight: 700;
    line-height: 16px;
    color: #e8e8e8;
  }

  .foot {
    font-family: 'Noto Sans', 'Noto Sans CJK SC', sans-serif;
    font-size: 11px;
    line-height: 14px;
    color: #e0e0e0;
  }

  .axis.foot {
    padding-right: 4px;
    font-size: 12px;
    text-align: right;
  }

  .month {
    position: absolute;
    transform: translateX(-50%);
  }

  /* drawing */
  .grid { stroke: #a80c0c; stroke-dasharray: 1 1; }
  .grid.bright { stroke: #f02020; }
  .grid.light { stroke: #fff; }
  .up { fill: none; stroke: #ff3c3c; }
  .down { fill: #0ff; }
  .trend { fill: none; stroke: #c8c8c8; }
  .band { fill: #ff0; opacity: 0.29; }
  .bar-up { stroke: #ff3c3c; }
  .bar-down { stroke: #0ff; }
  .series, .sar { fill: none; }
  .s-white { stroke: #e8e8e8; }
  .s-yellow { stroke: #ff0; }
  .s-lime { stroke: #0f0; }
  .s-red { stroke: #f00; }
  .s-magenta { stroke: #f0f; }
  .s-violet { stroke: #8080ff; }
  .s-orange { stroke: #ff8000; }
  .s-blue { stroke: #2fa0e0; }
  .s-crimson { stroke: #d03050; }

  /* quote panel */
  .quote {
    flex: none;
    display: flex;
    flex-direction: column;
    width: 240px;
    border-left: 1px solid #c01010;
    background: #000;
  }

  .quote-head {
    position: relative;
    height: 24px;
  }

  .quote-head h1 {
    margin: 0;
    padding-right: 14px;
    font-family: 'Liberation Serif', 'Noto Sans CJK SC', serif;
    font-size: 21px;
    font-weight: 400;
    line-height: 24px;
    text-align: center;
    color: #ff0;
  }

  .quote-head button {
    position: absolute;
    top: 1px;
    right: 1px;
  }

  .ratio {
    height: 4px;
    padding: 0 1px;
    border: solid #c01010;
    border-width: 1px 0;
    background: #00e600 content-box;
  }

  .ratio i {
    display: block;
    width: 37%;
    height: 100%;
    background: #ff3c3c;
  }

  .quote table {
    width: 100%;
    table-layout: fixed;
    border-collapse: collapse;
    border-bottom: 1px solid #c01010;
    line-height: 20px;
  }

  .quote th {
    padding: 0;
    font-size: 14px;
    font-weight: 400;
    text-align: left;
    color: #e8e8e8;
  }

  .quote td {
    padding: 0;
    font-family: 'Liberation Sans', 'Noto Sans CJK SC', sans-serif;
    font-size: 14px;
    font-weight: 700;
    text-align: right;
  }

  .book tr,
  .stats tr {
    height: 20px;
  }

  .book .big {
    height: 30px;
  }

  .book .big td {
    font-size: 21px;
  }

  .quote .book th,
  .quote .stats th:first-child {
    width: 38px;
    padding-left: 5px;
  }

  .book .price {
    width: 69px;
  }

  .quote .book .size {
    padding-left: 15px;
    text-align: left;
  }

  .stats td:nth-child(2) {
    width: 69px;
  }

  .quote .stats th:nth-child(3) {
    width: 38px;
    padding-left: 15px;
  }

  .quote .stats td:last-child {
    padding-right: 6px;
  }

  .quote .ticks {
    line-height: 22px;
    border-bottom: 0;
  }

  .ticks tr {
    height: 22px;
  }

  .quote .ticks th {
    text-align: right;
    color: #888;
  }

  .quote .ticks th:nth-child(1) { width: 35px; padding-left: 5px; text-align: left; }
  .ticks th:nth-child(2) { width: 64px; }
  .ticks th:nth-child(3) { width: 48px; }
  .ticks th:nth-child(4) { width: 48px; }
  .quote .ticks th:nth-child(5) { padding-right: 4px; }

  .quote .second {
    padding-right: 2px;
    font-size: 12px;
    font-weight: 400;
  }

  .quote .kind {
    padding-right: 4px;
    font-weight: 400;
  }

  .quote-foot {
    display: flex;
    flex: none;
    height: 16px;
    margin-top: auto;
  }

  .quote-foot::after {
    content: '';
    flex: 1;
    border-top: 1px solid #c01010;
  }

  .quote-foot button {
    width: 38px;
    border: solid #c01010;
    border-width: 0 1px 1px 0;
    border-bottom-right-radius: 3px;
    font-size: 12px;
    line-height: 14px;
    color: #fff;
  }

  /* status bar, only its top edge fits the window */
  .status {
    flex: none;
    display: flex;
    gap: 12px;
    height: 9px;
    overflow: hidden;
    padding-right: 4px;
    background: linear-gradient(#d0d0d0, #b4b4b4);
    line-height: 24px;
    white-space: nowrap;
  }

  .status b {
    color: #f22;
  }

  .status .index {
    min-width: 66px;
  }

  .status i {
    width: 1px;
    background: #888;
  }

  .status .clock {
    margin-left: auto;
  }
</style>
